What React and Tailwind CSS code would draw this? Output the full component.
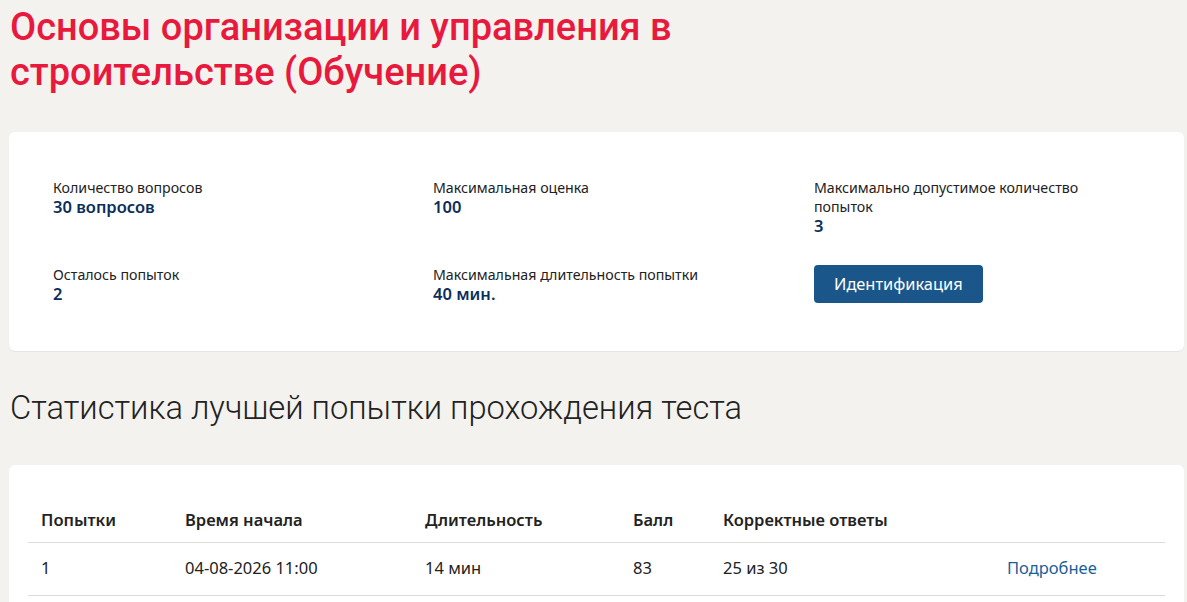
export default function App() {
  const info = [
    { label: "Количество вопросов", value: "30 вопросов" },
    { label: "Максимальная оценка", value: "100" },
    { label: "Максимально допустимое количество попыток", value: "3" },
    { label: "Осталось попыток", value: "2" },
    { label: "Максимальная длительность попытки", value: "40 мин." },
  ];

  return (
    <div className="min-h-screen bg-[#f3f2ef] pl-[9px] pr-[3px] pt-[5px] pb-8 font-['Noto_Sans',sans-serif] text-[#222]">
      <h1 className="font-['Roboto',sans-serif] text-[38px] leading-[45px] font-medium text-[#e8193c] max-w-[700px] pl-px">
        Основы организации и управления в строительстве (Обучение)
      </h1>

      <section className="mt-[37px] rounded-md bg-white pl-[44px] pt-[46px] pb-[47px] shadow-[0_1px_1px_rgba(0,0,0,0.06)]">
        <div className="grid grid-cols-[380px_381px_1fr] gap-y-[29px]">
          {info.map((item) => (
            <div key={item.label} className="max-w-[290px]">
              <div className="text-[14.2px] leading-[19px]">{item.label}</div>
              <div className="text-[16.5px] leading-[20px] font-semibold text-[#0b2f5b]">
                {item.value}
              </div>
            </div>
          ))}
          <div>
            <button className="rounded bg-[#1b568b] px-[20px] h-[38px] text-[16.4px] text-white">
              Идентификация
            </button>
          </div>
        </div>
      </section>

      <h2 className="mt-[37px] pl-px font-['Roboto',sans-serif] text-[32.7px] leading-[40px] font-light text-[#222]">
        Статистика лучшей попытки прохождения теста
      </h2>

      <section className="mt-[37px] rounded-md bg-white px-[19px] pt-[35px] pb-6">
        <table className="w-full table-fixed text-left text-[16.5px]">
          <thead>
            <tr className="border-b border-[#dedcd6]">
              <th className="w-[157px] pl-[13px] h-[42px] font-semibold">Попытки</th>
              <th className="w-[240px] font-semibold">Время начала</th>
              <th className="w-[208px] font-semibold">Длительность</th>
              <th className="w-[90px] font-semibold">Балл</th>
              <th className="w-[284px] font-semibold">Корректные ответы</th>
              <th></th>
            </tr>
          </thead>
          <tbody>
            <tr className="border-b border-[#dedcd6]">
              <td className="pl-[13px] h-[53px]">1</td>
              <td>04-08-2026 11:00</td>
              <td>14 мин</td>
              <td>83</td>
              <td>25 из 30</td>
              <td className="text-[#1b5f99]">Подробнее</td>
            </tr>
          </tbody>
        </table>
      </section>
    </div>
  );
}
